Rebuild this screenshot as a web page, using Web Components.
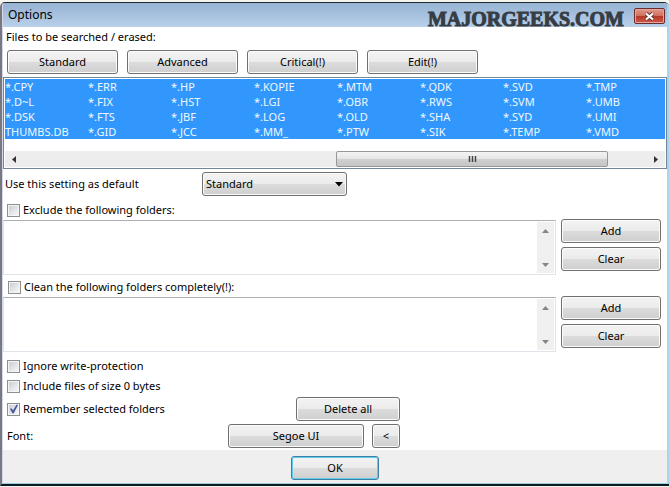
<!DOCTYPE html>
<html lang="en">
<head>
<meta charset="utf-8">
<title>Options</title>
<style>
html { background: #f4f4f1; }
body { margin: 0; padding: 2px 0 1px; min-height: 100vh; box-sizing: border-box; display: flex; flex-direction: column; font: 11px/16px "Noto Sans", "Open Sans", sans-serif; color: #000; }
options-window { flex: 1; }
</style>
</head>
<body>
<options-window></options-window>
<script>
const define = (name, html, setup) => {
  const template = document.createElement("template");
  template.innerHTML = html;
  customElements.define(name, class extends HTMLElement {
    connectedCallback() {
      if (this.shadowRoot) return;
      this.attachShadow({ mode: "open" }).append(template.content.cloneNode(true));
      if (setup) setup(this, this.shadowRoot);
    }
  });
};

define("push-button", `
<style>
:host { display: block; }
button { display: block; width: 100%; height: 24px; margin: 0; padding: 0 4px; box-sizing: border-box; border: 1px solid #707070; border-radius: 3px; box-shadow: inset 0 0 0 1px #fbfbfb; background: linear-gradient(#f3f3f3, #ebebeb 50%, #dcdcdc 50%, #cfcfcf); font: inherit; color: #000; }
:host([default]) button { border-color: #3c7fa5; box-shadow: inset 0 0 0 1px #5fcdeb; }
</style>
<button type="button"><slot></slot></button>`);

define("check-option", `
<style>
:host { display: flex; }
label { display: flex; align-items: center; gap: 3px; height: 16px; white-space: nowrap; }
input { appearance: none; margin: 0; width: 13px; height: 13px; box-sizing: border-box; border: 1px solid #8e8f8f; background: linear-gradient(135deg, #cbcfd5, #f6f6f6) content-box, #f4f4f4; padding: 1px; box-shadow: inset 0 0 0 1px #f4f4f4; }
span { position: relative; display: flex; }
svg { position: absolute; left: 2px; top: 1px; width: 10px; height: 10px; display: none; pointer-events: none; }
input:checked + svg { display: block; }
</style>
<label><span><input type="checkbox"><svg viewBox="0 0 10 10"><path d="M1 5 2.6 4.2 4 6.4 7.6 .6 9 1 4.6 9.4 3.7 9.4Z" fill="#43559b"/></svg></span><slot></slot></label>`,
(host, root) => { root.querySelector("input").checked = host.hasAttribute("checked"); });

define("title-bar", `
<style>
:host { display: flex; align-items: center; height: 24px; padding-left: 5px; background: linear-gradient(#98b4d3, #a6c0de 50%, #b9d1ea); }
h1 { margin: 0; flex: 1; font: 12px/16px "Noto Sans", sans-serif; }
.brand { font: bold 20px/24px "Liberation Serif", serif; color: #373d43; -webkit-text-stroke: 1px #373d43; margin: 8px 10px 0 0; height: 24px; }
button { align-self: flex-start; margin: 5px 2px 0 0; width: 31px; height: 16px; padding: 0; border: 1px solid #6b2a2c; border-radius: 2px; box-shadow: inset 0 0 0 1px #e3a79f; background: linear-gradient(#e0998c, #d0705f 48%, #b6352a 50%, #cc5b48); display: grid; place-items: center; }
svg { width: 13px; height: 11px; }
</style>
<h1><slot></slot></h1>
<span class="brand">MAJORGEEKS.COM</span>
<button type="button" aria-label="Close"><svg viewBox="0 0 13 11"><path d="M3 2.5 10 8.5M10 2.5 3 8.5" stroke="#603738" stroke-width="4"/><path d="M3 2.5 10 8.5M10 2.5 3 8.5" stroke="#fff" stroke-width="2.2"/></svg></button>`);

define("file-list", `
<style>
:host { display: block; border: 1px solid #74869a; padding: 1px; background: #fff; }
.items { display: grid; grid-template-rows: repeat(4, 15px); grid-auto-flow: column; grid-auto-columns: 83px; overflow: hidden; background: #3197fd; color: #f0f8ff; line-height: 15px; margin-bottom: 12px; }
.bar { display: grid; grid-template-columns: 17px 314fr 272fr 40fr 17px; height: 16px; background: #ededed; }
button { padding: 0; border: 0; background: none; display: grid; place-items: center; }
.thumb { grid-column: 3; border: 1px solid #979797; border-radius: 2px; box-sizing: border-box; background: linear-gradient(#f3f3f3, #e6e6e6 50%, #d0d0d0 50%, #c5c5c5); display: grid; place-items: center; }
.next { grid-column: 5; }
svg { width: 9px; height: 9px; }
</style>
<div class="items" role="listbox" aria-multiselectable="true" aria-label="File patterns"></div>
<div class="bar"><button type="button" aria-label="Scroll left"><svg viewBox="0 0 9 9"><path d="M7 1v7L3 4.5Z" fill="#333"/></svg></button><div class="thumb"><svg viewBox="0 0 9 9"><path d="M1.5 1v6M4.5 1v6M7.5 1v6" stroke="#444" stroke-width="1.500"/></svg></div><button class="next" type="button" aria-label="Scroll right"><svg viewBox="0 0 9 9"><path d="M2 1v7l4-3.500Z" fill="#333"/></svg></button></div>`,
(host, root) => {
  const names = "*.CPY *.D~L *.DSK THUMBS.DB *.ERR *.FIX *.FTS *.GID *.HP *.HST *.JBF *.JCC *.KOPIE *.LGI *.LOG *.MM_ *.MTM *.OBR *.OLD *.PTW *.QDK *.RWS *.SHA *.SIK *.SVD *.SVM *.SYD *.TEMP *.TMP *.UMB *.UMI *.VMD".split(" ");
  root.querySelector(".items").append(...names.map(name => {
    const item = document.createElement("div");
    item.setAttribute("role", "option");
    item.setAttribute("aria-selected", "true");
    item.textContent = name;
    return item;
  }));
});

define("drop-down", `
<style>
:host { display: flex; align-items: center; height: 24px; }
label { width: 197px; }
span { position: relative; width: 145px; display: block; }
select { appearance: none; display: block; width: 100%; height: 24px; padding: 0 20px 0 3px; border: 1px solid #707070; border-radius: 3px; box-shadow: inset 0 0 0 1px #fbfbfb; background: linear-gradient(#f3f3f3, #ebebeb 50%, #dcdcdc 50%, #cfcfcf); font: inherit; color: #000; }
svg { position: absolute; right: 4px; top: 10px; width: 8px; height: 5px; pointer-events: none; }
</style>
<label for="preset"><slot></slot></label>
<span><select id="preset"><option>Standard</option><option>Advanced</option></select><svg viewBox="0 0 8 5"><path d="M0 0h8L4 4.500Z" fill="#000"/></svg></span>`);

define("folder-field", `
<style>
:host { display: grid; grid-template-columns: 1fr 100px; column-gap: 5px; align-items: start; padding-right: 6px; }
.box { display: flex; height: 55px; box-sizing: border-box; border: 1px solid #e2e3ea; border-top-color: #abadb3; padding: 1px; margin-top: 1px; background: #fff; }
textarea { flex: 1; min-width: 0; border: 0; margin: 0; padding: 2px; resize: none; outline: 0; overflow: hidden; font: inherit; }
.scroll { width: 17px; background: #f0f0f0; display: flex; flex-direction: column; justify-content: space-between; }
button { border: 0; padding: 0; height: 17px; background: none; display: grid; place-items: center; }
svg { width: 7px; height: 4px; }
.actions { display: grid; gap: 4px; }
</style>
<div class="box"><textarea></textarea><div class="scroll"><button type="button" aria-label="Scroll up"><svg viewBox="0 0 7 4"><path d="M0 4h7L3.500 0Z" fill="#858585"/></svg></button><button type="button" aria-label="Scroll down"><svg viewBox="0 0 7 4"><path d="M0 0h7L3.500 4Z" fill="#858585"/></svg></button></div></div>
<div class="actions"><push-button>Add</push-button><push-button>Clear</push-button></div>`,
(host, root) => { root.querySelector("textarea").setAttribute("aria-label", host.getAttribute("label")); });

define("options-window", `
<style>
:host { display: flex; flex-direction: column; box-sizing: border-box; border-top: 1px solid #20282e; border-left: 2px solid #77797e; border-bottom: 2px solid #0a1b22; border-radius: 5px 5px 0 0; overflow: hidden; background: #fff; }
.frame { flex: 1; display: flex; flex-direction: column; border-left: 1px solid #d5d7ec; border-right: 2px solid #a5d6e9; border-bottom: 1px solid #9bcbdc; }
main { flex: 1; display: flex; flex-direction: column; }
.caption { margin: 2px 3px 5px; }
.presets { display: grid; grid-template-columns: repeat(4, 111px); gap: 9px; padding: 0 4px 3px; }
drop-down { margin: 3px 2px 6px; }
.exclude { margin: 0 4px 1px; }
.clean { margin: 4px 5px 1px; }
.flags { display: grid; gap: 4px; margin: 6px 4px 3px; }
.fonts { display: grid; grid-template-columns: 221px 68px 68px 8px 28px; align-items: center; margin: 0 4px 2px; row-gap: 3px; }
.remember { grid-column: 1 / 3; }
.delete { grid-column: 3 / 6; }
.family { grid-column: 2 / 4; }
.less { grid-column: 5; }
footer { background: #efefef; padding: 6px 0 3px; display: grid; justify-content: center; grid-template-columns: 88px; }
</style>
<div class="frame">
<title-bar>Options</title-bar>
<main>
<div class="caption">Files to be searched / erased:</div>
<div class="presets"><push-button>Standard</push-button><push-button>Advanced</push-button><push-button>Critical(!)</push-button><push-button>Edit(!)</push-button></div>
<file-list></file-list>
<drop-down>Use this setting as default</drop-down>
<check-option class="exclude">Exclude the following folders:</check-option>
<folder-field label="Excluded folders"></folder-field>
<check-option class="clean">Clean the following folders completely(!):</check-option>
<folder-field label="Folders to clean"></folder-field>
<div class="flags"><check-option>Ignore write-protection</check-option><check-option>Include files of size 0 bytes</check-option></div>
<div class="fonts"><check-option class="remember" checked>Remember selected folders</check-option><push-button class="delete">Delete all</push-button><span>Font:</span><push-button class="family">Segoe UI</push-button><push-button class="less">&lt;</push-button></div>
</main>
<footer><push-button default>OK</push-button></footer>
</div>`);
</script>
</body>
</html>
